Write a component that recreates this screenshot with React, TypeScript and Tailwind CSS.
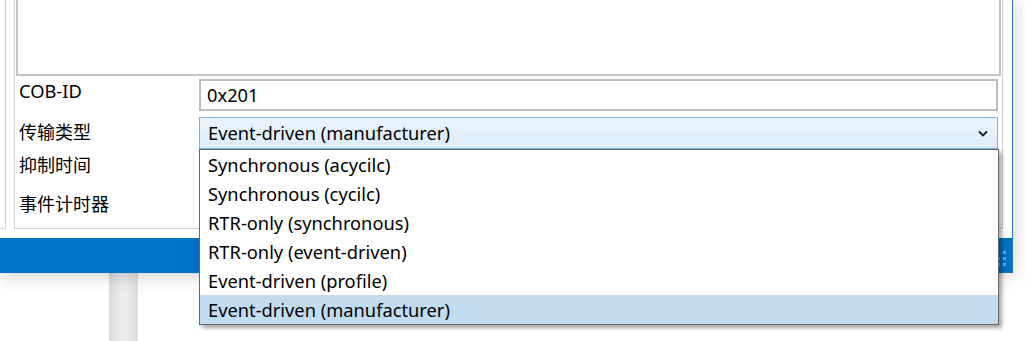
import React from "react";

const items = [
  "Synchronous (acycilc)",
  "Synchronous (cycilc)",
  "RTR-only (synchronous)",
  "RTR-only (event-driven)",
  "Event-driven (profile)",
  "Event-driven (manufacturer)",
];

function Chevron() {
  return (
    <svg width="10" height="7" viewBox="0 0 10 7" className="block">
      <polyline points="1,1.5 5,5.5 9,1.5" fill="none" stroke="#1a1a1a" strokeWidth="1.8" />
    </svg>
  );
}

export default function App() {
  const dots = [0, 0, 1, 0, 1, 1, 1, 1, 1];
  return (
    <div className="relative w-[1027px] h-[341px] overflow-hidden bg-white text-black font-['Noto_Sans','Noto_Sans_CJK_SC',sans-serif]">
      {/* background window edge behind */}
      <div className="absolute left-[109px] top-0 w-[29px] h-full bg-[linear-gradient(to_right,#d9d9db,#e9e9eb_35%,#ebebed_60%,#dcdcde)]" />

      {/* main window */}
      <div className="absolute left-0 top-0 z-10 w-[1013px] h-[273px] bg-white border-r border-[#2a78cc] shadow-[0_2px_18px_rgba(0,0,0,0.2)] flex flex-col">
        <div className="flex h-[238px]">
          <div className="w-[6px] h-[229px] border-r border-b border-[#d6d6d6]" />
          <div className="ml-[8px] w-[989px] h-[229px] border-x border-b border-[#d3d3d3] flex flex-col">
            <div className="ml-[1px] w-[985px] h-[76px] border-x-2 border-b-2 border-[#c4c4c4]" />
            {/* row 1 */}
            <div className="mt-[3px] flex h-[32px]">
              <div className="w-[184px] pl-[4px] text-[18.3px] leading-[23px]">COB-ID</div>
              <div className="w-[799px] h-[32px] border-2 border-[#bcbcbc] flex items-center pl-[6px] text-[18.3px]">
                0x201
              </div>
            </div>
            {/* row 2 */}
            <div className="mt-[6px] flex h-[32px]">
              <div className="w-[184px] pl-[4px] pt-[3px] text-[18px] leading-[24px]">传输类型</div>
              <div className="w-[799px] h-[32px] border border-[#7db3e8] bg-[linear-gradient(to_bottom,#ebf4fc,#dcecfc)] flex items-center justify-between pl-[8px] pr-[9px] text-[18.3px]">
                <span>Event-driven (manufacturer)</span>
                <Chevron />
              </div>
            </div>
            <div className="mt-[4px] pl-[4px] text-[18px] leading-[24px]">抑制时间</div>
            <div className="mt-[15px] pl-[4px] text-[18px] leading-[24px]">事件计时器</div>
          </div>
        </div>
        <div className="h-[35px] bg-[#0071c5] flex justify-end items-end pr-[6px] pb-[7px]">
          <div className="grid grid-cols-3 gap-[3px]">
            {dots.map((d, i) => (
              <div key={i} className={d ? "w-[3px] h-[3px] bg-[#6aa8e0]" : "w-[3px] h-[3px]"} />
            ))}
          </div>
        </div>
      </div>

      {/* dropdown list */}
      <div className="absolute left-[199px] top-[149px] z-20 w-[800px] h-[176px] bg-white border border-[#676767] shadow-[3px_3px_4px_rgba(0,0,0,0.35)] flex flex-col">
        {items.map((t, i) => (
          <div
            key={t}
            className={
              i === items.length - 1
                ? "h-[29px] flex items-center pl-[8px] text-[18.3px] bg-[#c1dcf1]"
                : "h-[29px] flex items-center pl-[8px] text-[18.3px]"
            }
          >
            {t}
          </div>
        ))}
      </div>
    </div>
  );
}
